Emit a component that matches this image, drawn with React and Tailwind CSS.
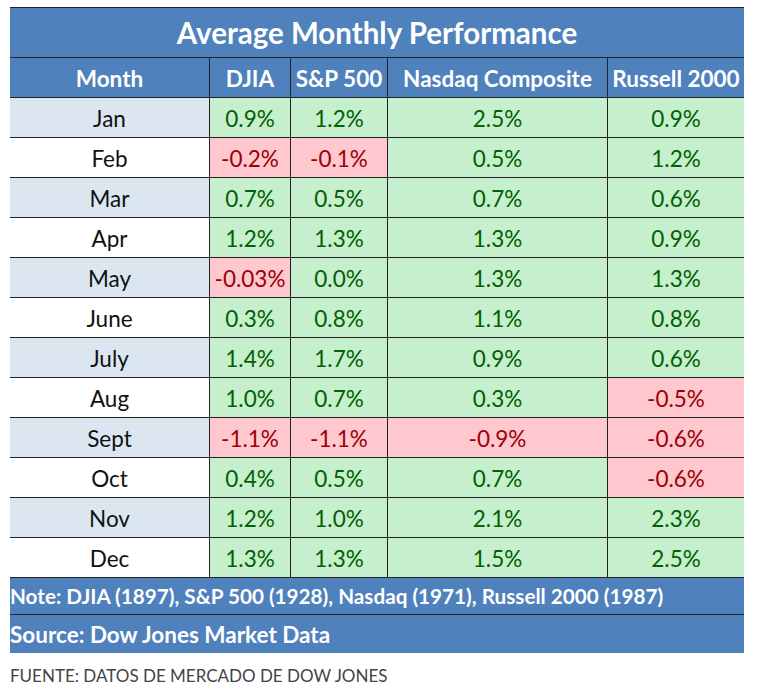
import React from 'react';

const rows = [
  ['Jan', '0.9%', '1.2%', '2.5%', '0.9%'],
  ['Feb', '-0.2%', '-0.1%', '0.5%', '1.2%'],
  ['Mar', '0.7%', '0.5%', '0.7%', '0.6%'],
  ['Apr', '1.2%', '1.3%', '1.3%', '0.9%'],
  ['May', '-0.03%', '0.0%', '1.3%', '1.3%'],
  ['June', '0.3%', '0.8%', '1.1%', '0.8%'],
  ['July', '1.4%', '1.7%', '0.9%', '0.6%'],
  ['Aug', '1.0%', '0.7%', '0.3%', '-0.5%'],
  ['Sept', '-1.1%', '-1.1%', '-0.9%', '-0.6%'],
  ['Oct', '0.4%', '0.5%', '0.7%', '-0.6%'],
  ['Nov', '1.2%', '1.0%', '2.1%', '2.3%'],
  ['Dec', '1.3%', '1.3%', '1.5%', '2.5%'],
];

const headers = ['Month', 'DJIA', 'S&P 500', 'Nasdaq Composite', 'Russell 2000'];

const grid = 'grid grid-cols-[199px_81px_97px_220px_137px]';

const App = () => {
  return (
    <div className="w-[757px] h-[692px] bg-white pt-[7px] pl-[10px] font-['Lato','Open_Sans',sans-serif]">
      <div className="w-[734px] border-t border-[#222]">
        {/* Title */}
        <div className="h-[50px] pt-[2px] bg-[#4f81bd] border-b border-[#222] flex items-center justify-center text-white font-bold text-[29.5px]">
          Average Monthly Performance
        </div>

        {/* Header */}
        <div className={`${grid} h-[40px] bg-[#4f81bd] border-b border-[#222] text-white font-bold text-[22.5px]`}>
          {headers.map((h, i) => (
            <div
              key={h}
              className={`flex items-center justify-center pt-[2px] whitespace-nowrap ${i > 0 ? 'border-l border-[#222]' : ''}`}
            >
              {h}
            </div>
          ))}
        </div>

        {/* Rows */}
        {rows.map((r, idx) => (
          <div key={r[0]} className={`${grid} h-[40px] border-b border-[#222] text-[22.5px]`}>
            <div
              className={`flex items-center justify-center pt-[2px] text-[#111] ${idx % 2 === 0 ? 'bg-[#dce6f1]' : 'bg-white'}`}
            >
              {r[0]}
            </div>
            {r.slice(1).map((v, i) => {
              const neg = v.startsWith('-');
              return (
                <div
                  key={i}
                  className={`flex items-center justify-center pt-[2px] border-l border-[#222] ${
                    neg ? 'bg-[#ffc7ce] text-[#9c0006]' : 'bg-[#c6efce] text-[#006100]'
                  }`}
                >
                  {v}
                </div>
              );
            })}
          </div>
        ))}

        {/* Footer notes */}
        <div className="h-[37px] pt-[2px] bg-[#4f81bd] border-b border-[#222] flex items-center text-white font-bold text-[20.7px] whitespace-nowrap">
          Note: DJIA (1897), S&amp;P 500 (1928), Nasdaq (1971), Russell 2000 (1987)
        </div>
        <div className="h-[38px] pt-[2px] bg-[#4f81bd] flex items-center text-white font-bold text-[22.5px]">
          Source: Dow Jones Market Data
        </div>
      </div>

      <div className="mt-[14px] text-[17px] text-[#444] leading-none">
        FUENTE: DATOS DE MERCADO DE DOW JONES
      </div>
    </div>
  );
};

export default App;
